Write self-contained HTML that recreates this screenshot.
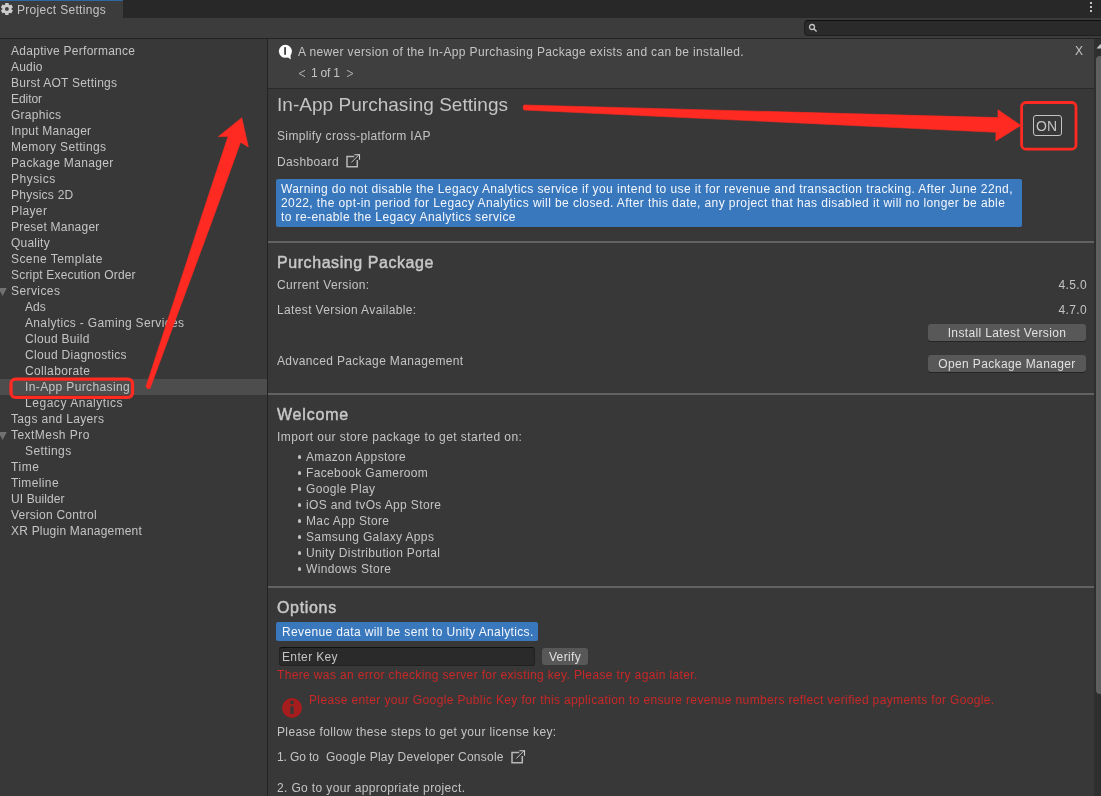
<!DOCTYPE html>
<html><head><meta charset="utf-8"><style>
html,body{margin:0;padding:0;}
body{width:1101px;height:796px;position:relative;overflow:hidden;background:#383838;font-family:"Liberation Sans",sans-serif;color:#c4c4c4;}
.t{position:absolute;white-space:pre;will-change:transform;}
.r{position:absolute;}
</style></head><body>
<div class="r" style="left:0px;top:0px;width:1101px;height:18px;background:#282828;"></div>
<div class="r" style="left:0px;top:0px;width:123px;height:18px;background:#3c3c3c;"></div>
<div class="r" style="left:0px;top:0px;width:123px;height:1px;background:#2e65a3;"></div>
<div class="r" style="left:0px;top:18px;width:1101px;height:20px;background:#3c3c3c;"></div>
<div class="r" style="left:0px;top:38px;width:1101px;height:1px;background:#232323;"></div>
<div class="r" style="left:0px;top:39px;width:267px;height:757px;background:#383838;"></div>
<div class="r" style="left:267px;top:39px;width:1px;height:757px;background:#232323;"></div>
<div class="r" style="left:268px;top:39px;width:826px;height:757px;background:#383838;"></div>
<div class="r" style="left:804px;top:20px;width:310px;height:16px;background:#2a2a2a;border:1px solid #1f1f1f;border-top-color:#0f0f0f;border-radius:4px;box-sizing:border-box;"></div>
<svg class="r" style="left:808px;top:23px" width="10" height="10" viewBox="0 0 10 10"><circle cx="4" cy="4" r="2.5" fill="none" stroke="#c4c4c4" stroke-width="1.3"/><line x1="5.8" y1="5.8" x2="8.6" y2="8.6" stroke="#c4c4c4" stroke-width="1.4"/></svg>
<div class="r" style="left:1090px;top:2px;width:2px;height:2px;background:#c4c4c4;"></div>
<div class="r" style="left:1090px;top:6px;width:2px;height:2px;background:#c4c4c4;"></div>
<div class="r" style="left:1090px;top:10px;width:2px;height:2px;background:#c4c4c4;"></div>
<svg class="r" style="left:0px;top:2px" width="14" height="14" viewBox="0 0 14 14"><g fill="#cccccc"><circle cx="6.9" cy="6.9" r="4.6"/><rect x="5.1" y="0.9" width="3.6" height="4" rx="0.6" transform="rotate(0 6.9 6.9)"/><rect x="5.1" y="0.9" width="3.6" height="4" rx="0.6" transform="rotate(60 6.9 6.9)"/><rect x="5.1" y="0.9" width="3.6" height="4" rx="0.6" transform="rotate(120 6.9 6.9)"/><rect x="5.1" y="0.9" width="3.6" height="4" rx="0.6" transform="rotate(180 6.9 6.9)"/><rect x="5.1" y="0.9" width="3.6" height="4" rx="0.6" transform="rotate(240 6.9 6.9)"/><rect x="5.1" y="0.9" width="3.6" height="4" rx="0.6" transform="rotate(300 6.9 6.9)"/></g><circle cx="6.9" cy="6.9" r="1.9" fill="#3c3c3c"/></svg>
<div class="t" style="left:17px;top:1.84px;font-size:12px;line-height:16px;letter-spacing:0.31px;color:#c4c4c4;">Project Settings</div>
<div class="t" style="left:11px;top:42.54px;font-size:12px;line-height:16px;letter-spacing:0.279px;color:#c4c4c4;">Adaptive Performance</div>
<div class="t" style="left:11px;top:58.54px;font-size:12px;line-height:16px;letter-spacing:0.175px;color:#c4c4c4;">Audio</div>
<div class="t" style="left:11px;top:74.54px;font-size:12px;line-height:16px;letter-spacing:0.247px;color:#c4c4c4;">Burst AOT Settings</div>
<div class="t" style="left:11px;top:90.54px;font-size:12px;line-height:16px;letter-spacing:-0.06px;color:#c4c4c4;">Editor</div>
<div class="t" style="left:11px;top:106.54px;font-size:12px;line-height:16px;letter-spacing:0.271px;color:#c4c4c4;">Graphics</div>
<div class="t" style="left:11px;top:122.54px;font-size:12px;line-height:16px;letter-spacing:0.225px;color:#c4c4c4;">Input Manager</div>
<div class="t" style="left:11px;top:138.54px;font-size:12px;line-height:16px;letter-spacing:0.35px;color:#c4c4c4;">Memory Settings</div>
<div class="t" style="left:11px;top:154.54px;font-size:12px;line-height:16px;letter-spacing:0.35px;color:#c4c4c4;">Package Manager</div>
<div class="t" style="left:11px;top:170.54px;font-size:12px;line-height:16px;letter-spacing:0.483px;color:#c4c4c4;">Physics</div>
<div class="t" style="left:11px;top:186.54px;font-size:12px;line-height:16px;letter-spacing:0.244px;color:#c4c4c4;">Physics 2D</div>
<div class="t" style="left:11px;top:202.54px;font-size:12px;line-height:16px;letter-spacing:0.38px;color:#c4c4c4;">Player</div>
<div class="t" style="left:11px;top:218.54px;font-size:12px;line-height:16px;letter-spacing:0.223px;color:#c4c4c4;">Preset Manager</div>
<div class="t" style="left:11px;top:234.54px;font-size:12px;line-height:16px;letter-spacing:0.217px;color:#c4c4c4;">Quality</div>
<div class="t" style="left:11px;top:250.54px;font-size:12px;line-height:16px;letter-spacing:0.431px;color:#c4c4c4;">Scene Template</div>
<div class="t" style="left:11px;top:266.54px;font-size:12px;line-height:16px;letter-spacing:0.186px;color:#c4c4c4;">Script Execution Order</div>
<svg class="r" style="left:-2px;top:288px" width="10" height="9" viewBox="0 0 10 9"><path d="M0.4 0 L8.8 0 L4.6 8 Z" fill="#727272"/></svg>
<div class="t" style="left:11px;top:282.54px;font-size:12px;line-height:16px;letter-spacing:0.414px;color:#c4c4c4;">Services</div>
<div class="t" style="left:25px;top:298.54px;font-size:12px;line-height:16px;letter-spacing:0.0px;color:#c4c4c4;">Ads</div>
<div class="t" style="left:25px;top:314.54px;font-size:12px;line-height:16px;letter-spacing:0.346px;color:#c4c4c4;">Analytics - Gaming Services</div>
<div class="t" style="left:25px;top:330.54px;font-size:12px;line-height:16px;letter-spacing:0.3px;color:#c4c4c4;">Cloud Build</div>
<div class="t" style="left:25px;top:346.54px;font-size:12px;line-height:16px;letter-spacing:0.3px;color:#c4c4c4;">Cloud Diagnostics</div>
<div class="t" style="left:25px;top:362.54px;font-size:12px;line-height:16px;letter-spacing:0.36px;color:#c4c4c4;">Collaborate</div>
<div class="r" style="left:0px;top:379px;width:267px;height:16px;background:#4d4d4d;"></div>
<div class="t" style="left:25px;top:378.54px;font-size:12px;line-height:16px;letter-spacing:0.375px;color:#c4c4c4;">In-App Purchasing</div>
<div class="t" style="left:25px;top:394.54px;font-size:12px;line-height:16px;letter-spacing:0.54px;color:#c4c4c4;">Legacy Analytics</div>
<div class="t" style="left:11px;top:410.54px;font-size:12px;line-height:16px;letter-spacing:0.35px;color:#c4c4c4;">Tags and Layers</div>
<svg class="r" style="left:-2px;top:432px" width="10" height="9" viewBox="0 0 10 9"><path d="M0.4 0 L8.8 0 L4.6 8 Z" fill="#727272"/></svg>
<div class="t" style="left:11px;top:426.54px;font-size:12px;line-height:16px;letter-spacing:0.455px;color:#c4c4c4;">TextMesh Pro</div>
<div class="t" style="left:25px;top:442.54px;font-size:12px;line-height:16px;letter-spacing:0.4px;color:#c4c4c4;">Settings</div>
<div class="t" style="left:11px;top:458.54px;font-size:12px;line-height:16px;letter-spacing:0.567px;color:#c4c4c4;">Time</div>
<div class="t" style="left:11px;top:474.54px;font-size:12px;line-height:16px;letter-spacing:0.386px;color:#c4c4c4;">Timeline</div>
<div class="t" style="left:11px;top:490.54px;font-size:12px;line-height:16px;letter-spacing:0.1px;color:#c4c4c4;">UI Builder</div>
<div class="t" style="left:11px;top:506.54px;font-size:12px;line-height:16px;letter-spacing:0.257px;color:#c4c4c4;">Version Control</div>
<div class="t" style="left:11px;top:522.54px;font-size:12px;line-height:16px;letter-spacing:0.211px;color:#c4c4c4;">XR Plugin Management</div>
<div class="r" style="left:268px;top:39px;width:826px;height:49px;background:#3f3f3f;"></div>
<div class="r" style="left:268px;top:88px;width:826px;height:1px;background:#2a2a2a;"></div>
<svg class="r" style="left:278px;top:44px" width="15" height="17" viewBox="0 0 15 17"><circle cx="7.4" cy="7.3" r="6.5" fill="#ffffff"/><path d="M9 12.8 L12.8 15.4 L12.4 10.4 Z" fill="#ffffff"/><rect x="6.2" y="3.1" width="1.8" height="7.7" fill="#3f3f3f"/></svg>
<div class="t" style="left:298px;top:44.34px;font-size:12px;line-height:16px;letter-spacing:0.36px;color:#c4c4c4;">A newer version of the In-App Purchasing Package exists and can be installed.</div>
<div class="t" style="left:310.5px;top:64.84px;font-size:12px;line-height:16px;letter-spacing:-0.2px;color:#c4c4c4;">1 of 1</div>
<svg class="r" style="left:295px;top:66px" width="65" height="14" viewBox="0 0 65 14"><path d="M10 4.3 L4 7.5 L10 10.7 M52 4.3 L58 7.5 L52 10.7" fill="none" stroke="#b4b4b4" stroke-width="1"/></svg>
<div class="t" style="left:1075px;top:42.84px;font-size:12px;line-height:16px;letter-spacing:0px;color:#c4c4c4;">X</div>
<div class="t" style="left:276.5px;top:91.92px;font-size:19px;line-height:25px;letter-spacing:0.03px;color:#c4c4c4;">In-App Purchasing Settings</div>
<div class="t" style="left:277px;top:128.04px;font-size:12px;line-height:16px;letter-spacing:0.36px;color:#c4c4c4;">Simplify cross-platform IAP</div>
<div class="t" style="left:277px;top:153.84px;font-size:12px;line-height:16px;letter-spacing:0.36px;color:#c4c4c4;">Dashboard</div>
<svg class="r" style="left:345px;top:153px" width="16" height="16" viewBox="0 0 16 16"><path d="M9.2 3.6 H2 V13.8 H12.3 V7.1" fill="none" stroke="#b8b8b8" stroke-width="1.5"/><path d="M6.3 9.5 L14.3 1.5" fill="none" stroke="#c8c8c8" stroke-width="0.95"/><path d="M9.4 1.7 H14.5 V6.8" fill="none" stroke="#d0d0d0" stroke-width="1.1"/></svg>
<div class="r" style="left:1033px;top:115px;width:29px;height:21px;border:1px solid #c4c4c4;border-radius:3px;box-sizing:border-box;"></div>
<div class="t" style="left:1036.3px;top:116.65px;font-size:14px;line-height:19px;letter-spacing:0px;color:#c4c4c4;">ON</div>
<div class="r" style="left:276px;top:179px;width:746px;height:48px;background:#3a78be;border-radius:2px;"></div>
<div class="t" style="left:280.8px;top:180.84px;font-size:12px;line-height:16px;letter-spacing:0.41px;color:#f4f7fb;">Warning do not disable the Legacy Analytics service if you intend to use it for revenue and transaction tracking. After June 22nd,</div>
<div class="t" style="left:280.8px;top:195.14px;font-size:12px;line-height:16px;letter-spacing:0.41px;color:#f4f7fb;">2022, the opt-in period for Legacy Analytics will be closed. After this date, any project that has disabled it will no longer be able</div>
<div class="t" style="left:280.8px;top:209.44px;font-size:12px;line-height:16px;letter-spacing:0.41px;color:#f4f7fb;">to re-enable the Legacy Analytics service</div>
<div class="r" style="left:268px;top:241px;width:826px;height:2px;background:#626262;"></div>
<div class="r" style="left:268px;top:393px;width:826px;height:2px;background:#626262;"></div>
<div class="r" style="left:268px;top:586px;width:826px;height:2px;background:#626262;"></div>
<div class="t" style="left:277.3px;top:251.56px;font-size:16px;line-height:21px;letter-spacing:0.57px;color:#c8c8c8;-webkit-text-stroke:0.45px #c8c8c8;">Purchasing Package</div>
<div class="t" style="left:277px;top:276.84px;font-size:12px;line-height:16px;letter-spacing:0.36px;color:#c4c4c4;">Current Version:</div>
<div class="t" style="left:277px;top:301.84px;font-size:12px;line-height:16px;letter-spacing:0.36px;color:#c4c4c4;">Latest Version Available:</div>
<div class="t" style="left:277px;top:352.54px;font-size:12px;line-height:16px;letter-spacing:0.36px;color:#c4c4c4;">Advanced Package Management</div>
<div class="t" style="left:987px;top:276.94px;width:100px;text-align:right;font-size:12px;line-height:16px;letter-spacing:0.36px;color:#c4c4c4">4.5.0</div>
<div class="t" style="left:987px;top:301.64px;width:100px;text-align:right;font-size:12px;line-height:16px;letter-spacing:0.36px;color:#c4c4c4">4.7.0</div>
<div class="r" style="left:928px;top:324px;width:158px;height:17px;background:#585858;border-radius:3px;box-shadow:0 1px 0 #242424;"></div>
<div class="t" style="left:928px;top:324.84px;width:158px;text-align:center;font-size:12px;line-height:16px;letter-spacing:0.36px;color:#e0e0e0">Install Latest Version</div>
<div class="r" style="left:928px;top:355px;width:158px;height:17px;background:#585858;border-radius:3px;box-shadow:0 1px 0 #242424;"></div>
<div class="t" style="left:928px;top:355.84px;width:158px;text-align:center;font-size:12px;line-height:16px;letter-spacing:0.36px;color:#e0e0e0">Open Package Manager</div>
<div class="t" style="left:277.3px;top:403.96px;font-size:16px;line-height:21px;letter-spacing:0.8px;color:#c8c8c8;-webkit-text-stroke:0.45px #c8c8c8;">Welcome</div>
<div class="t" style="left:277px;top:428.84px;font-size:12px;line-height:16px;letter-spacing:0.43px;color:#c4c4c4;">Import our store package to get started on:</div>
<div class="r" style="left:297.5px;top:455.4px;width:3.6px;height:3.6px;background:#c4c4c4;border-radius:50%;"></div>
<div class="t" style="left:306px;top:448.84px;font-size:12px;line-height:16px;letter-spacing:0.36px;color:#c4c4c4;">Amazon Appstore</div>
<div class="r" style="left:297.5px;top:471.4px;width:3.6px;height:3.6px;background:#c4c4c4;border-radius:50%;"></div>
<div class="t" style="left:306px;top:464.84px;font-size:12px;line-height:16px;letter-spacing:0.36px;color:#c4c4c4;">Facebook Gameroom</div>
<div class="r" style="left:297.5px;top:487.4px;width:3.6px;height:3.6px;background:#c4c4c4;border-radius:50%;"></div>
<div class="t" style="left:306px;top:480.84px;font-size:12px;line-height:16px;letter-spacing:0.36px;color:#c4c4c4;">Google Play</div>
<div class="r" style="left:297.5px;top:503.4px;width:3.6px;height:3.6px;background:#c4c4c4;border-radius:50%;"></div>
<div class="t" style="left:306px;top:496.84px;font-size:12px;line-height:16px;letter-spacing:0.36px;color:#c4c4c4;">iOS and tvOs App Store</div>
<div class="r" style="left:297.5px;top:519.4px;width:3.6px;height:3.6px;background:#c4c4c4;border-radius:50%;"></div>
<div class="t" style="left:306px;top:512.84px;font-size:12px;line-height:16px;letter-spacing:0.36px;color:#c4c4c4;">Mac App Store</div>
<div class="r" style="left:297.5px;top:535.4px;width:3.6px;height:3.6px;background:#c4c4c4;border-radius:50%;"></div>
<div class="t" style="left:306px;top:528.84px;font-size:12px;line-height:16px;letter-spacing:0.36px;color:#c4c4c4;">Samsung Galaxy Apps</div>
<div class="r" style="left:297.5px;top:551.4px;width:3.6px;height:3.6px;background:#c4c4c4;border-radius:50%;"></div>
<div class="t" style="left:306px;top:544.84px;font-size:12px;line-height:16px;letter-spacing:0.36px;color:#c4c4c4;">Unity Distribution Portal</div>
<div class="r" style="left:297.5px;top:567.4px;width:3.6px;height:3.6px;background:#c4c4c4;border-radius:50%;"></div>
<div class="t" style="left:306px;top:560.84px;font-size:12px;line-height:16px;letter-spacing:0.36px;color:#c4c4c4;">Windows Store</div>
<div class="t" style="left:277.3px;top:596.56px;font-size:16px;line-height:21px;letter-spacing:0.67px;color:#c8c8c8;-webkit-text-stroke:0.45px #c8c8c8;">Options</div>
<div class="r" style="left:276px;top:622px;width:262px;height:19px;background:#3a78be;border-radius:2px;"></div>
<div class="t" style="left:281.5px;top:623.84px;font-size:12px;line-height:16px;letter-spacing:0.36px;color:#f4f7fb;">Revenue data will be sent to Unity Analytics.</div>
<div class="r" style="left:279px;top:647px;width:256px;height:19px;background:#2a2a2a;border:1px solid #212121;border-top-color:#0f0f0f;border-radius:3px;box-sizing:border-box;"></div>
<div class="t" style="left:282px;top:648.84px;font-size:12px;line-height:16px;letter-spacing:0.36px;color:#c4c4c4;">Enter Key</div>
<div class="r" style="left:542px;top:648px;width:46px;height:17px;background:#585858;border-radius:3px;"></div>
<div class="t" style="left:542px;top:648.84px;width:46px;text-align:center;font-size:12px;line-height:16px;letter-spacing:0.36px;color:#e0e0e0">Verify</div>
<div class="t" style="left:277px;top:666.84px;font-size:12px;line-height:16px;letter-spacing:0.36px;color:#c82828;">There was an error checking server for existing key. Please try again later.</div>
<svg class="r" style="left:282px;top:698px" width="20" height="20" viewBox="0 0 20 20"><circle cx="10" cy="10" r="10" fill="#a51d1d"/><circle cx="10" cy="4.3" r="1.9" fill="#383838"/><rect x="8.4" y="8.3" width="3.2" height="7.6" fill="#383838"/></svg>
<div class="t" style="left:308.8px;top:691.84px;font-size:12px;line-height:16px;letter-spacing:0.36px;color:#c82828;">Please enter your Google Public Key for this application to ensure revenue numbers reflect verified payments for Google.</div>
<div class="t" style="left:277px;top:723.84px;font-size:12px;line-height:16px;letter-spacing:0.36px;color:#c4c4c4;">Please follow these steps to get your license key:</div>
<div class="t" style="left:277px;top:748.84px;font-size:12px;line-height:16px;letter-spacing:-0.1px;color:#c4c4c4;">1. Go to</div>
<div class="t" style="left:326.3px;top:748.84px;font-size:12px;line-height:16px;letter-spacing:0.24px;color:#c4c4c4;">Google Play Developer Console</div>
<svg class="r" style="left:510px;top:749px" width="16" height="16" viewBox="0 0 16 16"><path d="M9.2 3.6 H2 V13.8 H12.3 V7.1" fill="none" stroke="#b8b8b8" stroke-width="1.5"/><path d="M6.3 9.5 L14.3 1.5" fill="none" stroke="#c8c8c8" stroke-width="0.95"/><path d="M9.4 1.7 H14.5 V6.8" fill="none" stroke="#d0d0d0" stroke-width="1.1"/></svg>
<div class="t" style="left:277px;top:779.84px;font-size:12px;line-height:16px;letter-spacing:0.36px;color:#c4c4c4;">2. Go to your appropriate project.</div>
<div class="r" style="left:1094px;top:39px;width:7px;height:757px;background:#2f2f2f;"></div>
<svg class="r" style="left:1094px;top:43px" width="7" height="7" viewBox="0 0 7 7"><path d="M6.5 1 L10.5 5.5 L2.5 5.5 Z" fill="#c4c4c4"/></svg>
<div class="r" style="left:1096px;top:56px;width:8px;height:638px;background:#5f5f5f;border-radius:4px;"></div>
<svg class="r" style="left:0;top:0" width="1101" height="796" viewBox="0 0 1101 796">
<rect x="11" y="379.2" width="121.5" height="18.1" rx="4.5" fill="none" stroke="#ff2a22" stroke-width="3.3"/>
<rect x="1021.6" y="102.5" width="54.4" height="46.6" rx="4.2" fill="none" stroke="#ff2a22" stroke-width="2.8"/>
<path d="M524 105 Q522 107.3 524 110 L996 132.3 L995.8 140.9 L1020.8 125.4 L998 109.8 L998 117.6 Z" fill="#ff2a22" stroke="#ff2a22" stroke-width="0.6" stroke-linejoin="round"/>
<path d="M146 386.5 Q147.5 390 150 388.5 L212.4 220 L240.6 142.2 L248.3 147 L241.8 117.8 L218.4 136.6 L228 136.6 L200.4 220 Z" fill="#ff2a22" stroke="#ff2a22" stroke-width="0.6" stroke-linejoin="round"/>
</svg>
</body></html>
